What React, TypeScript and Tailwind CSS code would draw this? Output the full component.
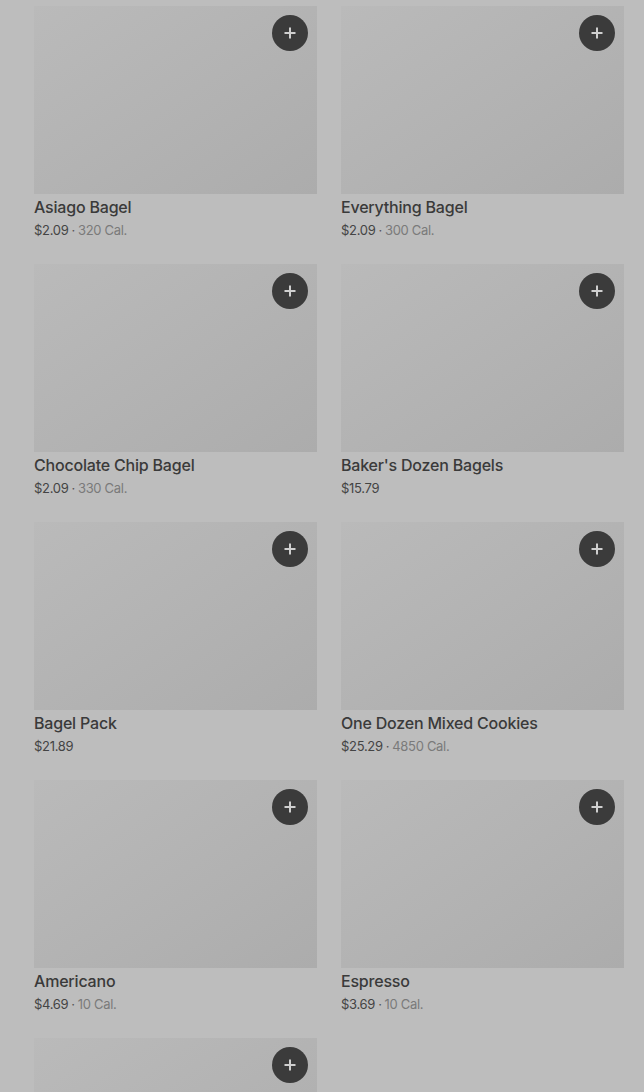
import React from "react";

type Item = { name: string; price: string; cal?: string };

const items: Item[] = [
  { name: "Asiago Bagel", price: "$2.09", cal: "320 Cal." },
  { name: "Everything Bagel", price: "$2.09", cal: "300 Cal." },
  { name: "Chocolate Chip Bagel", price: "$2.09", cal: "330 Cal." },
  { name: "Baker's Dozen Bagels", price: "$15.79" },
  { name: "Bagel Pack", price: "$21.89" },
  { name: "One Dozen Mixed Cookies", price: "$25.29", cal: "4850 Cal." },
  { name: "Americano", price: "$4.69", cal: "10 Cal." },
  { name: "Espresso", price: "$3.69", cal: "10 Cal." },
  { name: "Cappuccino", price: "$4.29", cal: "120 Cal." },
];

const PlusIcon = () => (
  <svg width="14" height="14" viewBox="0 0 14 14" fill="none">
    <path d="M7 1.5v11M1.5 7h11" stroke="#cfcfcf" strokeWidth="2" />
  </svg>
);

const ItemCard = ({ item }: { item: Item }) => {
  return (
    <div className="flex flex-col">
      <div className="relative h-[188px] bg-gradient-to-br from-[#bababa] via-[#b3b3b3] to-[#acacac]">
        <button className="absolute top-[9px] right-[9px] w-9 h-9 rounded-full bg-[#3b3b3b] flex items-center justify-center">
          <PlusIcon />
        </button>
      </div>
      <p className="mt-[3px] text-[16px] leading-[20px] font-medium tracking-[-0.2px] text-[#3a3a3a]">
        {item.name}
      </p>
      <p className="mt-[4px] text-[13px] leading-[18px] tracking-[-0.3px] text-[#444444]">
        {item.price}
        {item.cal && (
          <span className="text-[#7a7a7a]">
            <span className="mx-[3px] text-[#555555]">·</span>
            {item.cal}
          </span>
        )}
      </p>
    </div>
  );
};

export default function App() {
  return (
    <div
      className="h-[1092px] overflow-hidden bg-[#bdbdbd] pt-[6px] pl-[34px] pr-[20px]"
      style={{ fontFamily: "Inter, 'Noto Sans', sans-serif" }}
    >
      <div className="grid grid-cols-2 gap-x-6 gap-y-[25px]">
        {items.map((item) => (
          <ItemCard key={item.name} item={item} />
        ))}
      </div>
    </div>
  );
}
